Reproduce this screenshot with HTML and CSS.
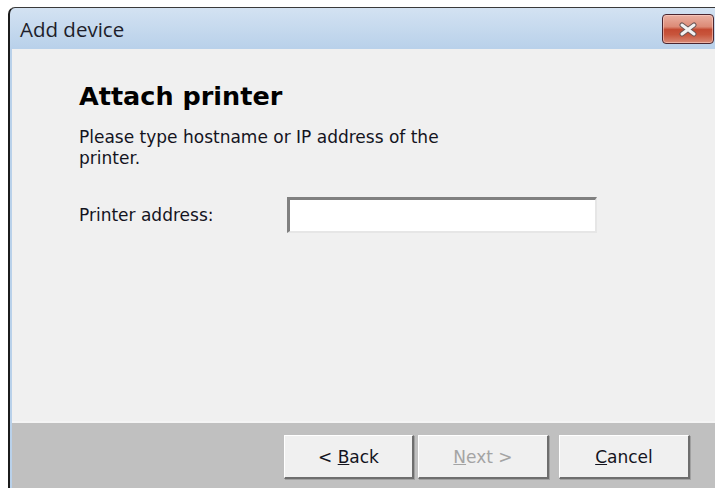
FILE: index.html
```html
<!DOCTYPE html>
<html>
<head>
<meta charset="utf-8">
<link rel="stylesheet" href="styles.css">
</head>
<body>
<div class="window">
  <div class="titlebar">
    <span class="title">Add device</span>
    <button class="close" aria-label="Close">
      <svg width="22" height="15" viewBox="0 0 22 15">
        <path d="M5 3 L17 12 M17 3 L5 12" stroke="#6b5656" stroke-width="5" stroke-linecap="round"/>
        <path d="M5 3 L17 12 M17 3 L5 12" stroke="#f2f2f2" stroke-width="3" stroke-linecap="round"/>
      </svg>
    </button>
  </div>
  <div class="client">
    <div class="page">
      <h1 class="heading">Attach printer</h1>
      <p class="desc">Please type hostname or IP address of the printer.</p>
      <div class="field">
        <label class="label" for="addr">Printer address:</label>
        <input class="input" id="addr" type="text">
      </div>
    </div>
    <div class="footer">
      <button class="btn back">&lt; <u>B</u>ack</button>
      <button class="btn disabled"><u>N</u>ext &gt;</button>
      <button class="btn cancel"><u>C</u>ancel</button>
    </div>
  </div>
</div>
</body>
</html>
```
FILE: styles.css
```css
html, body {
  margin: 0;
  padding: 0;
  background: #ffffff;
  width: 715px;
  height: 488px;
  overflow: hidden;
}

body {
  font-family: "DejaVu Sans", Tahoma, sans-serif;
  padding: 7px 0 0 8px;
  box-sizing: border-box;
}

/* window frame: dark outline, light blue glass strip */
.window {
  width: 707px;
  height: 481px;
  border-left: 2px solid #1c1c1c;
  border-top: 1px solid #3a3a3a;
  border-top-left-radius: 7px;
  background: linear-gradient(#d3e2f2, #b9d1ea 40px, #b9d1ea);
  display: flex;
  flex-direction: column;
  padding-left: 2px;
  box-sizing: border-box;
}

.titlebar {
  height: 41px;
  flex: none;
  display: flex;
  align-items: flex-start;
  justify-content: space-between;
  padding-left: 8px;
  padding-right: 1px;
}

.title {
  font-family: "Open Sans", "DejaVu Sans", sans-serif;
  font-size: 20.5px;
  line-height: 30px;
  margin-top: 6px;
  color: #1e1e2a;
}

.close {
  width: 52px;
  height: 30px;
  margin-top: 6px;
  padding: 0;
  border: 1px solid #4a2630;
  border-radius: 4px;
  background: linear-gradient(#eab0a2 0%, #dc8a76 42%, #c44a32 52%, #c8553c 70%, #d88a76 100%);
  box-shadow: inset 0 0 0 1px rgba(255, 215, 205, 0.55);
  display: flex;
  align-items: center;
  justify-content: center;
}

.client {
  flex: 1;
  background: #f0f0f0;
  display: flex;
  flex-direction: column;
}

.page {
  flex: 1;
  padding: 32px 0 0 67px;
}

.heading {
  margin: 0;
  font-family: "DejaVu Sans", Tahoma, sans-serif;
  font-size: 25.5px;
  line-height: 30px;
  font-weight: bold;
  color: #000;
}

.desc {
  margin: 16px 0 0 0;
  width: 380px;
  font-size: 17px;
  line-height: 21px;
  color: #14141e;
}

.field {
  display: flex;
  align-items: center;
  margin-top: 28px;
}

.label {
  width: 208px;
  font-size: 17px;
  line-height: 21px;
  color: #14141e;
}

.input {
  width: 310px;
  height: 36px;
  box-sizing: border-box;
  border: 2px solid #e6e6e6;
  border-top: 3px solid #808080;
  border-left: 3px solid #808080;
  background: #fff;
  outline: none;
}

.footer {
  height: 67px;
  flex: none;
  box-sizing: border-box;
  background: #c0c0c0;
  border-top: 2px solid #f4f4f4;
  display: flex;
  align-items: flex-start;
  padding-top: 12px;
  padding-left: 272px;
}

.btn {
  width: 130px;
  height: 44px;
  background: #f0f0f0;
  border: 1px solid #ffffff;
  border-right: 2px solid #6e6e6e;
  border-bottom: 2px solid #6e6e6e;
  box-shadow: 1px 1px 0 #a0a0a0;
  font-family: "DejaVu Sans", Tahoma, sans-serif;
  font-size: 17px;
  color: #14141e;
  padding: 0;
}

.btn.back {
  margin-right: 4px;
}

.btn.disabled {
  width: 131px;
  color: #a4a4a4;
  margin-right: 10px;
}

.btn.cancel {
  width: 131px;
}
```
